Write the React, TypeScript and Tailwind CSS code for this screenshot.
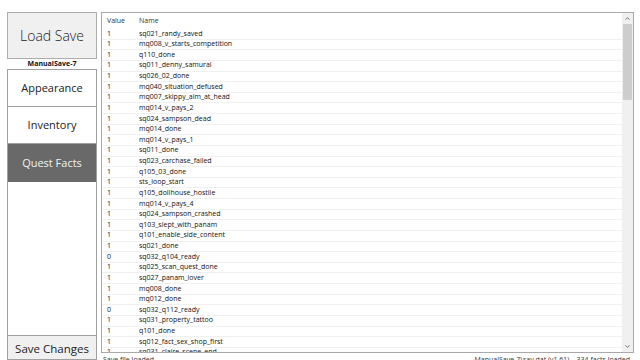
import { ChevronUp, ChevronDown } from 'lucide-react';

const facts: [string, string][] = [
  ['1', 'sq021_randy_saved'],
  ['1', 'mq008_v_starts_competition'],
  ['1', 'q110_done'],
  ['1', 'sq011_denny_samurai'],
  ['1', 'sq026_02_done'],
  ['1', 'mq040_situation_defused'],
  ['1', 'mq007_skippy_aim_at_head'],
  ['1', 'mq014_v_pays_2'],
  ['1', 'sq024_sampson_dead'],
  ['1', 'mq014_done'],
  ['1', 'mq014_v_pays_1'],
  ['1', 'sq011_done'],
  ['1', 'sq023_carchase_failed'],
  ['1', 'q105_03_done'],
  ['1', 'sts_loop_start'],
  ['1', 'q105_dollhouse_hostile'],
  ['1', 'mq014_v_pays_4'],
  ['1', 'sq024_sampson_crashed'],
  ['1', 'q103_slept_with_panam'],
  ['1', 'q101_enable_side_content'],
  ['1', 'sq021_done'],
  ['0', 'sq032_q104_ready'],
  ['1', 'sq025_scan_quest_done'],
  ['1', 'sq027_panam_lover'],
  ['1', 'mq008_done'],
  ['1', 'mq012_done'],
  ['0', 'sq032_q112_ready'],
  ['1', 'sq031_property_tattoo'],
  ['1', 'q101_done'],
  ['1', 'sq012_fact_sex_shop_first'],
  ['1', 'sq031_claire_scene_end'],
];

function NavItem({ label, active }: { label: string; active?: boolean }) {
  return (
    <div
      className={
        'flex items-center justify-center text-[11px] ' +
        (active ? 'bg-[#696969] text-[#f2f2f2] h-[38px]' : 'bg-white text-[#222] h-[37px] border-b border-[#a0a0a0]')
      }
    >
      {label}
    </div>
  );
}

export default function App() {
  return (
    <div className="w-[640px] h-[360px] bg-white flex overflow-hidden font-['Open_Sans','Noto_Sans',sans-serif]">
      <div className="w-[97px] shrink-0 pl-[7px] pt-[12px] flex flex-col">
        <div className="h-[47px] border border-[#adadad] bg-[#f0f0f0] flex items-center justify-center text-[14px] font-light text-[#222]">
          Load Save
        </div>
        <div className="h-[10px] flex items-center justify-center text-[7px] font-bold text-[#111]">
          ManualSave-7
        </div>
        <div className="flex-1 border border-[#a0a0a0] flex flex-col">
          <NavItem label="Appearance" />
          <NavItem label="Inventory" />
          <NavItem label="Quest Facts" active />
          <div className="flex-1 bg-white" />
          <div className="h-[24px] shrink-0 border-t border-[#a0a0a0] bg-[#f0f0f0] flex items-start justify-center pt-[4px] text-[11.5px] text-[#222]">
            Save Changes
          </div>
        </div>
      </div>

      <div className="flex-1 pl-[4px] pt-[12px] pr-[6px] flex flex-col">
        <div className="h-[341px] shrink-0 border border-[#a9a9a9] flex overflow-hidden">
          <div className="flex-1 flex flex-col overflow-hidden">
            <div className="h-[16px] shrink-0 flex items-center text-[7px] text-[#333]">
              <div className="w-[37px] pl-[5px]">Value</div>
              <div>Name</div>
            </div>
            {facts.map(([v, n], i) => (
              <div
                key={i}
                className="h-[10.63px] shrink-0 flex items-center text-[7px] text-[#111] border-b border-[#f0f0f0]"
              >
                <div className="w-[37px] pl-[5px]">{v}</div>
                <div>{n}</div>
              </div>
            ))}
          </div>
          <div className="w-[11px] shrink-0 bg-[#f0f0f0] flex flex-col items-center">
            <div className="h-[11px] flex items-center justify-center">
              <ChevronUp className="w-[7px] h-[7px] text-[#606060]" strokeWidth={3} />
            </div>
            <div className="w-[9px] h-[76px] bg-[#cdcdcd]" />
            <div className="flex-1" />
            <div className="h-[11px] flex items-center justify-center">
              <ChevronDown className="w-[7px] h-[7px] text-[#606060]" strokeWidth={3} />
            </div>
          </div>
        </div>
        <div className="h-[8px] flex justify-between pt-[2px] text-[7px] leading-[9px] text-[#333] whitespace-nowrap">
          <span className="pl-[2px]">Save file loaded.</span>
          <span className="pr-[4px]">ManualSave-7\sav.dat (v1.61) – 334 facts loaded</span>
        </div>
      </div>
    </div>
  );
}
